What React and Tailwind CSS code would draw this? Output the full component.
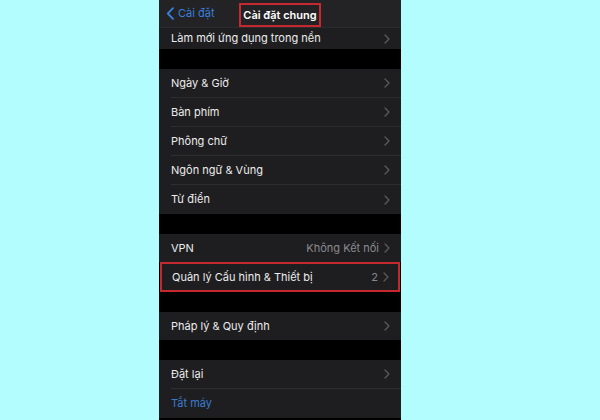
import React from "react";

const Chevron = () => (
    <svg width="6" height="10" viewBox="0 0 6 10" className="shrink-0">
        <path d="M1 1l4 4-4 4" fill="none" stroke="#5c5c60" strokeWidth="1.2" strokeLinecap="round" strokeLinejoin="round" />
    </svg>
);

const Row = ({ label, value, last, chevron = true, blue, h = "h-[29px]" }) => (
    <div className={`${h} flex items-center pl-[12px] bg-[#1e1e20]`}>
        <div className={`flex-1 h-full flex items-center pr-[11px] ${last ? "" : "border-b border-[#2e2e31]"}`}>
            <span className={`flex-1 text-[11px] ${blue ? "text-[#3a7bd0]" : "text-[#ececec]"}`}>{label}</span>
            {value && <span className="text-[11px] text-[#8a8a8e] mr-[5px]">{value}</span>}
            {chevron && <Chevron />}
        </div>
    </div>
);

const Gap = ({ h = "h-[20px]" }) => <div className={`${h} bg-black`} />;

export default function App() {
    return (
        <div className="w-[600px] h-[420px] bg-[#b3fcff] pl-[159px] overflow-hidden" style={{ fontFamily: "Inter, 'Noto Sans', sans-serif" }}>
            <div className="w-[242px] h-[420px] bg-black flex flex-col">
                {/* nav bar */}
                <div className="h-[28px] bg-[#232325] flex items-center relative border-b border-[#2c2c2e]">
                    <div className="flex items-center pl-[7px] gap-[3px] text-[#3a7fdc] text-[11px]">
                        <svg width="9" height="13" viewBox="0 0 9 13">
                            <path d="M7 1.2L1.8 6.5 7 11.8" fill="none" stroke="#3a7fdc" strokeWidth="1.8" strokeLinecap="round" strokeLinejoin="round" />
                        </svg>
                        <span>Cài đặt</span>
                    </div>
                    <div className="absolute left-[80px] top-[3px] w-[82px] h-[24px] border-2 border-[#c5282e] flex items-center justify-center">
                        <span className="text-white text-[11px] font-semibold">Cài đặt chung</span>
                    </div>
                </div>
                <Row label="Làm mới ứng dụng trong nền" last h="h-[21px]" />
                <Gap />
                <Row label="Ngày & Giờ" />
                <Row label="Bàn phím" />
                <Row label="Phông chữ" />
                <Row label="Ngôn ngữ & Vùng" />
                <Row label="Từ điển" last />
                <Gap />
                <Row label="VPN" value="Không Kết nối" h="h-[28px]" last />
                <div className="h-[30px] bg-[#1e1e20] border-2 border-[#c5282e] mx-px flex items-center pl-[10px] pr-[9px]">
                    <span className="flex-1 text-[11px] text-[#ececec]">Quản lý Cấu hình & Thiết bị</span>
                    <span className="text-[11px] text-[#8a8a8e] mr-[5px]">2</span>
                    <Chevron />
                </div>
                <Gap />
                <Row label="Pháp lý & Quy định" last h="h-[28px]" />
                <Gap />
                <Row label="Đặt lại" />
                <Row label="Tắt máy" chevron={false} blue last />
            </div>
        </div>
    );
}
